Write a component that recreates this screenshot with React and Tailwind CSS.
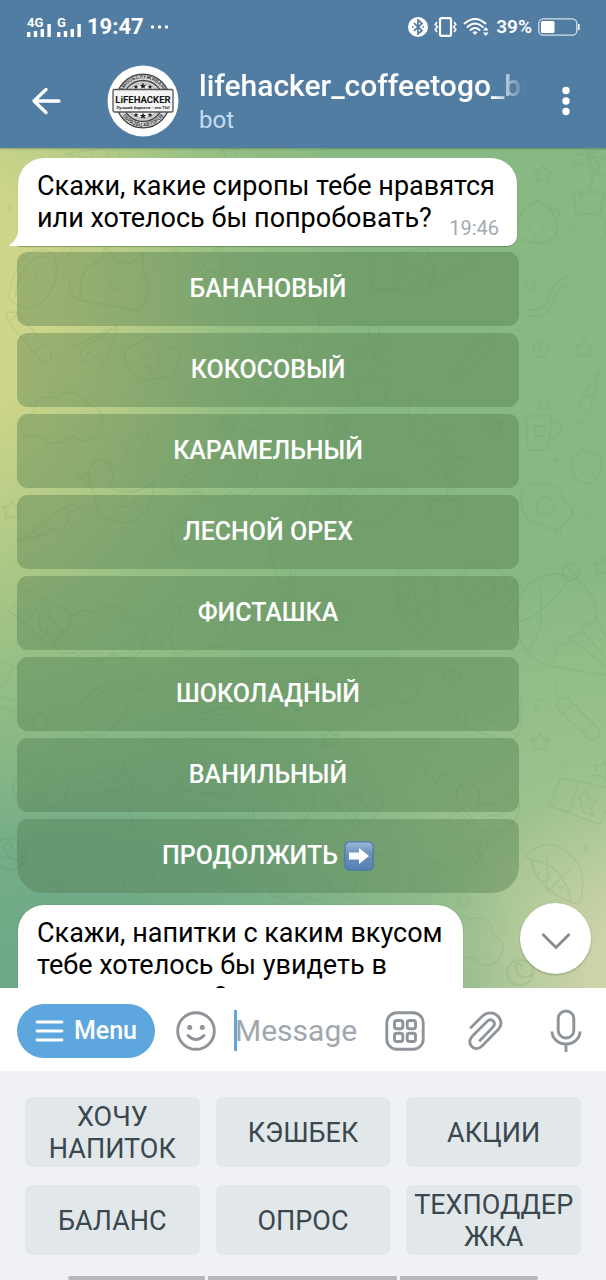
import React from "react";

const SYRUPS = [
  "БАНАНОВЫЙ",
  "КОКОСОВЫЙ",
  "КАРАМЕЛЬНЫЙ",
  "ЛЕСНОЙ ОРЕХ",
  "ФИСТАШКА",
  "ШОКОЛАДНЫЙ",
  "ВАНИЛЬНЫЙ",
];

const KEYS = ["ХОЧУ НАПИТОК", "КЭШБЕК", "АКЦИИ", "БАЛАНС", "ОПРОС", "ТЕХПОДДЕРЖКА"];

function Signal({ label }) {
  return (
    <svg width="26" height="22" viewBox="0 0 26 22" fill="#fff" role="img" aria-label={label}>
      <text x="0" y="11" fontSize="13" fontWeight="700" fontFamily="Roboto, sans-serif">
        {label}
      </text>
      <rect x="0" y="16" width="3.4" height="5" />
      <rect x="6.8" y="15" width="3.4" height="6" />
      <rect x="13.6" y="13" width="3.4" height="8" />
      <rect x="20.4" y="8" width="3.4" height="13" />
    </svg>
  );
}

function StatusBar() {
  return (
    <div className="flex h-[54px] items-center justify-between pl-[27px] pr-[26px]">
      <div className="flex items-center gap-1">
        <Signal label="4G" />
        <Signal label="G" />
        <span className="text-[22px] font-bold leading-7">19:47</span>
        <svg width="20" height="6" viewBox="0 0 20 6" fill="#fff" className="ml-0.5">
          <circle cx="2.5" cy="3" r="1.7" />
          <circle cx="9.5" cy="3" r="1.7" />
          <circle cx="16.5" cy="3" r="1.7" />
        </svg>
      </div>
      <div className="flex items-center gap-[6px]">
        <svg width="20" height="20" viewBox="0 0 20 20">
          <circle cx="10" cy="10" r="10" fill="#fff" />
          <path d="M6 6.2 14 13.5 10 17V3l4 3.5L6 13.8" fill="none" stroke="#527da3" strokeWidth="1.7" />
          <path d="M4 10h1.6M14.4 10H16" stroke="#527da3" strokeWidth="1.6" />
        </svg>
        <svg width="23" height="20" viewBox="0 0 23 20" fill="none" stroke="#fff">
          <rect x="6" y="1.2" width="11" height="17.6" rx="1.2" strokeWidth="2.2" />
          <path d="M3 5 1.2 7.5 3.4 10 1.2 12.5 3 15M20 5l1.8 2.5L19.6 10l2.2 2.5L20 15" strokeWidth="1.6" />
        </svg>
        <svg width="27" height="20" viewBox="0 0 27 20" fill="none" stroke="#fff" strokeLinecap="round">
          <path d="M1.5 6.5Q12 -2.5 22.5 6.5" strokeWidth="1.9" />
          <path d="M4.5 10Q12 3.2 20 10" strokeWidth="1.9" />
          <path d="M7.5 13Q12 9 16.5 13" strokeWidth="1.9" />
          <path d="M9.5 15.2q2.5-2 5 0L12 18z" fill="#fff" stroke="none" />
          <path d="M20 13.500 22.800 10l2.800 3.500zM20 15.500h5.600L22.800 19z" fill="#fff" stroke="none" />
        </svg>
        <span className="text-[19px] font-semibold leading-6">39%</span>
        <svg width="42" height="18" viewBox="0 0 42 18" fill="none">
          <rect x="0.8" y="0.8" width="38" height="16.4" rx="4.5" stroke="#d5e0ea" strokeWidth="1.3" />
          <rect x="3" y="3" width="13.5" height="12" rx="1.5" fill="#fff" />
          <path d="M40.8 6v6" stroke="#fff" strokeWidth="1.5" />
        </svg>
      </div>
    </div>
  );
}

function Avatar() {
  const star = "M0-2.600.700-.800 2.500-.800 1.100.400 1.600 2.200 0 1.100-1.600 2.200-1.100.400-2.500-.800-.700-.800z";
  return (
    <svg width="72" height="72" viewBox="0 0 72 72" className="shrink-0" role="img" aria-label="Lifehacker">
      <defs>
        <path id="seal-top" d="M13.500 36a22.500 22.500 0 0 1 45 0" />
        <path id="seal-bottom" d="M10.500 36a25.500 25.500 0 0 0 51 0" />
      </defs>
      <circle cx="36" cy="36" r="35.5" fill="#fff" />
      <circle cx="36" cy="36" r="26.8" fill="#dedede" stroke="#444" strokeWidth="1.3" />
      <circle cx="36" cy="36" r="20.5" fill="#cfcfcf" stroke="#444" strokeWidth="1.3" />
      <circle cx="36" cy="36" r="17" fill="#f2f2f2" stroke="#888" strokeWidth="0.6" />
      <g fontFamily="Roboto, sans-serif" fontSize="5.2" fontWeight="700" fill="#444">
        <text textAnchor="middle">
          <textPath href="#seal-top" startOffset="50%">САМООБСЛУЖИВАНИЕ</textPath>
        </text>
        <text textAnchor="middle">
          <textPath href="#seal-bottom" startOffset="50%">ОБРАЗЕЦ АВТОРОВ</textPath>
        </text>
      </g>
      <g fill="#222">
        <path d={star} transform="translate(29 22)" />
        <path d={star} transform="translate(36 21) scale(1.3)" />
        <path d={star} transform="translate(43 22)" />
        <path d={star} transform="translate(29 50)" />
        <path d={star} transform="translate(36 51) scale(1.3)" />
        <path d={star} transform="translate(43 50)" />
      </g>
      <rect x="6" y="24.5" width="60" height="22.5" rx="1.5" fill="#f4f4f4" stroke="#555" strokeWidth="1.3" />
      <text x="36" y="37.5" textAnchor="middle" fontFamily="Roboto, sans-serif" fontSize="9.6" fontWeight="700" fill="#151515">
        LiFEHACKER
      </text>
      <text x="36" y="44" textAnchor="middle" fontFamily="Roboto, sans-serif" fontSize="4.4" fontWeight="700" fill="#333">
        Лучший бариста - это ТЫ!
      </text>
    </svg>
  );
}

function Header() {
  return (
    <header className="relative z-10 shrink-0 bg-[#527da3] text-white shadow-[0_1px_2px_rgba(40,70,40,0.35)]">
      <StatusBar />
      <div className="flex h-[94px] items-center pl-[31px] pr-[35px]">
        <button type="button" aria-label="Back" className="shrink-0">
          <svg width="30" height="28" viewBox="0 0 30 28" fill="none" stroke="#fff" strokeWidth="3.3" strokeLinecap="round" strokeLinejoin="round">
            <path d="M28 14H3.500M15 2.500 3 14l12 11.500" />
          </svg>
        </button>
        <div className="ml-[46px]">
          <Avatar />
        </div>
        <div className="ml-5 min-w-0 flex-1 pt-1">
          <h1 className="overflow-hidden whitespace-nowrap text-[30px] font-medium leading-[34px] [mask-image:linear-gradient(to_right,black_calc(100%-32px),transparent)]">
            lifehacker_coffeetogo_bot
          </h1>
          <p className="text-2xl leading-[34px] text-[#c5ddf2]">bot</p>
        </div>
        <button type="button" aria-label="More options" className="ml-9 shrink-0">
          <svg width="10" height="30" viewBox="0 0 10 30" fill="#fff">
            <circle cx="5" cy="4.5" r="3.7" />
            <circle cx="5" cy="15" r="3.7" />
            <circle cx="5" cy="25.5" r="3.7" />
          </svg>
        </button>
      </div>
    </header>
  );
}

const SHAPES = {
  star: "M0-9 3-3 9-3 5 2 7 9 0 6-7 9-5 2-9-3-3-3z",
  swirl: "M1 0a2 2 0 1 0-3 1a5 5 0 1 0 6-5a8 8 0 1 0 4 8",
  dot: "M-2 0a2 2 0 1 0 4 0a2 2 0 1 0-4 0",
  ring: "M-5 0a5 5 0 1 0 10 0a5 5 0 1 0-10 0",
  cup: "M-14-14H12L8 20H-12zM12-8q10 0 9 9q-2 8-12 7M-5-4h9v10h-9zM-3-19q5-5 1-10M5-19q5-5 1-10",
  berry: "M-15-6Q0-18 15-6Q18 12 2 20Q-18 14-15-6M-5-12q5-9 10 0M-6 0l1 3M3-2l1 3M-2 8l1 3M7 7l1 3",
  balloon: "M-42 0a40 40 0 1 1 78-8L66 52-10 40a42 42 0 0 1-32-40M-20-37q6 40-12 62M6-42Q-16-12-40-4M36-8q-6 8-14 6q2 12-12 12q0 10-12 9q-2 12-10 20M22 4 60 50M10 12 58 50",
  melon: "M-28 8Q0-40 28-20Q32 10 0 26Q-22 28-28 8M-22 10Q0-30 24-15M-4 4v3M6-6v3M8 8v3M-12 12v3",
  pencil: "M-28-20-16-22 26 8Q30 16 20 20L-22-10zM-16-22-22-10M16 2 10 12M-28-20-22-10",
  pizza: "M-28-14Q0-40 24-8Q34 10 26 34L18 32Q12-6-22-10zM-22-10Q-16 20 18 32M-6-16V22L18-2M-14 2a6 6 0 1 0 10 0M4 14a4 4 0 1 0 8 0",
  torch: "M-20-16Q-10-26-4-14L22 12Q24 22 14 22L-14-4Q-22-8-20-16M-14-4-4-14M6 14l8-8M-22-26v-8M-30-18h-8",
  book: "M-26 8-14-20 34-10Q36 10 24 26zM-26 8l20 6 10-30M4-2l8-4 2 8 8 0-6 8 2 8-10-4z",
  cat: "M-24 20Q-34-4-14-16L-12-28-2-18H12L20-28 22-12Q36 4 24 20zM-8-4v2M10-4v2M-2 4q3 4 6 0M-24 20q-14-2-12-16",
  cloud: "M-34 16Q-44 0-26-4Q-24-24-4-18Q12-32 22-12Q44-8 34 14Q24 26 10 16Q-8 30-20 16z",
  duck: "M-30-20Q-26-36-12-28Q-4-18-12-6Q8 4 28-10Q30 20 4 26Q-24 26-24 2Q-30-8-30-20M-30-20l-10 4 10 6M-18-20v2M-6 8q12 8 20-4",
  egg: "M-24 6Q-34-12-14-16Q0-30 14-14Q34-12 26 4Q22 20 4 18Q-12 26-24 6M-9 0a9 9 0 1 0 18 0a9 9 0 1 0-18 0",
  flower: "M0-4Q-10-22 0-24Q10-22 0-4Q18-14 20-4Q16 6 0-4Q14 8 6 14Q-4 12 0-4Q-10 12-16 6Q-18-6 0-4M0 0Q6 20-2 34M1 20q10-8 14 0M-16 34H14l-4 22h-24z",
  cocktail: "M-22-24H22L2 4V28M-10 28H14M-14-12H12M4-24 12-38",
  wave: "M-22 16Q-4 18 0 4Q4-12 20-18M-20 22Q2 24 6 8Q8-6 22-10",
  cone: "M-26 18 12-24Q22-16 16-4zM-14 6l10 6M-4-6 8 2M12-24q14-8 18 4",
  plane: "M-26 4 26-20 12 18-4 6-10 18-12 4 26-20",
};

const DOODLES = [
  ["star", 543, 26], ["flower", 590, 10], ["dot", 581, 48], ["berry", 540, 74, 60, 1.3], ["cat", 590, 78, 20, 0.6],
  ["wave", 548, 146], ["ring", 530, 137], ["cloud", 588, 160, 80, 0.35], ["swirl", 541, 198], ["star", 584, 200],
  ["cone", 588, 246, 150, 0.8], ["cup", 540, 282], ["berry", 586, 316], ["dot", 553, 221], ["dot", 556, 312],
  ["egg", 545, 358, 30], ["cat", 577, 380, 5, 0.6], ["swirl", 571, 420, 0, 1.1], ["star", 603, 418],
  ["balloon", 560, 478], ["torch", 577, 570], ["star", 540, 594], ["dot", 537, 561], ["ring", 563, 614, 0, 0.6],
  ["book", 575, 650], ["star", 602, 622, 20], ["pizza", 553, 722], ["dot", 586, 700], ["dot", 556, 776],
  ["swirl", 520, 820, 0, 1.6], ["star", 464, 752, 0, 0.8], ["cloud", 468, 790, 20], ["melon", 430, 730, 20, 0.7],
  ["melon", 32, 132, -20], ["cat", 114, 134, 10, 1.2], ["pencil", 28, 190, 14], ["plane", 92, 198], ["egg", 152, 212],
  ["cloud", 62, 270, 0, 1.1], ["swirl", 226, 274], ["duck", 122, 346, 0, 1.1], ["cone", 48, 380, 10], ["flower", 146, 290, 30, 0.6],
  ["berry", 188, 388, 0, 1.1], ["star", 12, 362], ["book", 36, 464, 20], ["cloud", 100, 486, 0, 1.2], ["cat", 196, 482, -10],
  ["melon", 100, 562], ["swirl", 140, 530], ["ring", 40, 574, 0, 1.6], ["egg", 40, 642], ["cocktail", 124, 652, -15],
  ["pencil", 204, 640, -30], ["torch", 40, 728], ["berry", 138, 728, 20], ["duck", 222, 720, 15, 0.8], ["swirl", 10, 700, 0, 2],
  ["ring", 50, 20, 0, 1.8], ["cone", 90, 8, 40, 0.8], ["star", 230, 4], ["plane", 208, 116, -20, 0.8], ["torch", 66, 104, 70, 0.5],
  ["book", 396, 124, -20, 1.1], ["wave", 452, 120, 30], ["flower", 374, 200], ["pencil", 470, 210, 95], ["cloud", 464, 165, 0, 0.4],
  ["swirl", 336, 274, 0, 1.4], ["duck", 428, 276, 20, 0.8], ["flower", 446, 318], ["melon", 372, 350, 15, 1.1], ["cup", 320, 356, 20],
  ["cocktail", 262, 256, 20], ["cloud", 220, 328], ["star", 494, 278], ["pizza", 414, 448, 30], ["berry", 330, 462],
  ["egg", 486, 440, 40], ["torch", 282, 420, 30], ["cloud", 382, 534], ["swirl", 452, 526], ["plane", 290, 544, 10],
  ["cat", 494, 568, 20], ["star", 330, 590], ["book", 350, 646, 30], ["cone", 436, 630, 80], ["melon", 282, 660, 20],
  ["duck", 492, 658, -20], ["cocktail", 358, 724, 20], ["flower", 478, 704, 140, 0.8], ["cloud", 300, 736, 0, 0.8],
  ["balloon", 290, 180, 30, 0.7], ["wave", 214, 560, 50], ["dot", 176, 104], ["dot", 120, 292], ["dot", 10, 60], ["cocktail", 6, 540, 200, 0.8],
];

function Wallpaper() {
  return (
    <div
      aria-hidden="true"
      className="absolute inset-0 overflow-hidden bg-[#89b983] [background-image:radial-gradient(ellipse_66%_64%_at_-8%_18%,#d0d78a_0%,#ccd589_24%,rgba(196,210,136,0.75)_44%,rgba(170,201,134,0.4)_70%,rgba(137,185,131,0)_100%),radial-gradient(ellipse_76%_42%_at_12%_102%,#69a586_0%,rgba(114,171,136,0.9)_40%,rgba(126,178,134,0)_100%),radial-gradient(ellipse_80%_48%_at_112%_98%,#d4d6a8_0%,#ccd3a8_18%,rgba(176,203,152,0.5)_50%,rgba(137,185,131,0)_100%)]"
    >
      <svg viewBox="0 0 606 840" preserveAspectRatio="xMidYMin slice" className="h-full w-full" fill="none" stroke="#4d7f55" strokeOpacity="0.11" strokeWidth="1.4" strokeLinejoin="round" strokeLinecap="round">
        {DOODLES.map(([shape, x, y, turn = 0, size = 1], i) => (
          <path key={i} d={SHAPES[shape]} transform={`translate(${x} ${y}) rotate(${turn}) scale(${size})`} />
        ))}
      </svg>
    </div>
  );
}

const INLINE_KEY =
  "flex h-[74px] w-full items-center justify-center gap-1.5 bg-[#507a4e]/40 text-[25px] font-medium leading-8 text-white";

function Chat() {
  return (
    <main className="relative min-h-0 flex-1 overflow-hidden">
      <Wallpaper />
      <div className="relative pl-[17px] pr-[87px] pt-[10px] text-[27px] leading-8 text-black">
        <div className="relative ml-px mr-0.5 rounded-[26px] rounded-br-[10px] rounded-bl-none bg-white pb-3 pl-[19px] pr-[18px] pt-3 shadow-[0_1px_1px_rgba(50,80,50,0.4)]">
          <svg width="10" height="24" viewBox="0 0 10 24" className="absolute bottom-0 -left-[9px]" fill="#fff" aria-hidden="true">
            <path d="M10 0Q10 18 .500 22.500Q-.500 24 2 24H10z" />
          </svg>
          <p>
            Скажи, какие сиропы тебе нравятся
            <br />
            или хотелось бы попробовать?
          </p>
          <time className="absolute bottom-[6px] right-[18px] text-xl leading-6 text-[#a1aab3]">19:46</time>
        </div>
        <div className="mt-[6px] flex flex-col gap-[7px]">
          {SYRUPS.map((name) => (
            <button key={name} type="button" className={`${INLINE_KEY} rounded-[11px]`}>
              {name}
            </button>
          ))}
          <button type="button" className={`${INLINE_KEY} rounded-t-[11px] rounded-b-[27px]`}>
            ПРОДОЛЖИТЬ
            <svg width="30" height="30" viewBox="0 0 30 30" role="img" aria-label="➡️">
              <defs>
                <linearGradient id="arrow-tile" x1="0" y1="0" x2="0" y2="1">
                  <stop offset="0" stopColor="#9db9d6" />
                  <stop offset="0.4" stopColor="#6d93bd" />
                  <stop offset="1" stopColor="#5480b0" />
                </linearGradient>
              </defs>
              <rect x="0.8" y="0.8" width="28.4" height="28.4" rx="5" fill="url(#arrow-tile)" stroke="#4e78a6" strokeWidth="1.2" />
              <path d="M5 11.500H15V7L25 15 15 23V18.500H5z" fill="#fff" />
            </svg>
          </button>
        </div>
        <div className="ml-px mt-3 w-fit rounded-t-[26px] bg-white pb-3 pl-[19px] pr-5 pt-3 shadow-[0_0_1px_rgba(50,80,50,0.5)]">
          <p>
            Скажи, напитки с каким вкусом
            <br />
            тебе хотелось бы увидеть в
            <br />
            ассортименте?
          </p>
        </div>
      </div>
      <button
        type="button"
        aria-label="Scroll to bottom"
        className="absolute bottom-[14px] right-[15px] flex size-[71px] items-center justify-center rounded-full bg-white shadow-[0_1px_2px_rgba(60,80,50,0.4)]"
      >
        <svg width="32" height="20" viewBox="0 0 32 20" fill="none" stroke="#858c92" strokeWidth="2.8" className="mt-1">
          <path d="M2.500 3 16 16.500 29.500 3" />
        </svg>
      </button>
    </main>
  );
}

function Composer() {
  return (
    <form className="flex h-[83px] shrink-0 items-center bg-white pl-[17px] pr-[23px] pt-0.5 text-[#8e9499]" onSubmit={(e) => e.preventDefault()}>
      <button type="button" className="flex h-[54px] w-[138px] shrink-0 items-center justify-center gap-[10px] rounded-full bg-[#5ea6de] text-[25px] font-medium leading-8 text-white">
        <svg width="29" height="22" viewBox="0 0 29 22" stroke="#fff" strokeWidth="2.8" strokeLinecap="round">
          <path d="M2 2H27M2 11H27M2 20H27" />
        </svg>
        Menu
      </button>
      <button type="button" aria-label="Emoji" className="ml-5 shrink-0">
        <svg width="42" height="42" viewBox="0 0 42 42" fill="none" stroke="currentColor" strokeWidth="2.9" strokeLinecap="round">
          <circle cx="21" cy="21" r="18.3" />
          <path d="M13 25.500Q21 33.500 29 25.500" />
          <circle cx="14.7" cy="17.5" r="2.5" fill="currentColor" stroke="none" />
          <circle cx="27.3" cy="17.5" r="2.5" fill="currentColor" stroke="none" />
        </svg>
      </button>
      <div className="ml-[17px] h-[41px] w-[3px] shrink-0 bg-[#5ea6de]" />
      <input
        type="text"
        aria-label="Message"
        placeholder="Message"
        className="-ml-0.5 h-10 w-0 min-w-0 flex-1 bg-transparent text-[30px] text-black outline-none placeholder:text-[#a0a7ae]"
      />
      <button type="button" aria-label="Keyboard" className="shrink-0">
        <svg width="40" height="40" viewBox="0 0 40 40" fill="none" stroke="currentColor" strokeWidth="2.9">
          <rect x="1.8" y="1.8" width="36.4" height="36.4" rx="10" />
          <rect x="9.5" y="9.5" width="8.3" height="8.3" rx="2.3" />
          <rect x="22.2" y="9.5" width="8.3" height="8.3" rx="2.3" />
          <rect x="9.5" y="22.2" width="8.3" height="8.3" rx="2.3" />
          <rect x="22.2" y="22.2" width="8.3" height="8.3" rx="2.3" />
        </svg>
      </button>
      <button type="button" aria-label="Attach" className="ml-[43px] shrink-0">
        <svg width="36" height="40" viewBox="0 0 36 40" fill="none" stroke="currentColor" strokeWidth="2.8" strokeLinecap="round">
          <path d="M3 16.500 14.500 5C19 .800 26 .800 30 5.200C34 9.500 33.800 14.500 30 18.700L14 35C10.500 38.500 6.500 38.500 3.800 35.500C1 32.500 1.200 28.500 4.500 25L19 10.500C21.200 8.300 23.500 8.300 25.300 10C27 12 26.800 14.200 24.800 16.200L12 29.500" />
        </svg>
      </button>
      <button type="button" aria-label="Record voice" className="ml-[45px] shrink-0">
        <svg width="34" height="44" viewBox="0 0 34 44" fill="none" stroke="currentColor" strokeWidth="2.9">
          <rect x="9.2" y="2" width="15.6" height="27" rx="7.8" />
          <path d="M3 22.500A14 12.500 0 0 0 31 22.500M17 35.500V43" />
        </svg>
      </button>
    </form>
  );
}

function ReplyKeyboard() {
  return (
    <footer className="shrink-0 bg-[#eff1f6] pt-[26px]">
      <div className="grid grid-cols-3 gap-x-4 gap-y-[18px] px-[25px]">
        {KEYS.map((label) => (
          <button key={label} type="button" className="h-[70px] min-w-0 rounded-[7px] bg-[#e2e7ea] px-1 pt-0.5 text-[27px] leading-8 text-[#39474f] [overflow-wrap:anywhere]">
            {label}
          </button>
        ))}
      </div>
      <div className="mt-[21px] grid grid-cols-[137fr_190fr_138fr] gap-[3px] px-[68px]">
        <div className="h-1 rounded-l-sm bg-[#b7b7be]" />
        <div className="h-1 bg-[#b7b7be]" />
        <div className="h-1 rounded-r-sm bg-[#b7b7be]" />
      </div>
    </footer>
  );
}

export default function App() {
  return (
    <div className="flex h-screen flex-col overflow-hidden font-[Roboto,'Noto_Sans',sans-serif]">
      <Header />
      <Chat />
      <Composer />
      <ReplyKeyboard />
    </div>
  );
}
